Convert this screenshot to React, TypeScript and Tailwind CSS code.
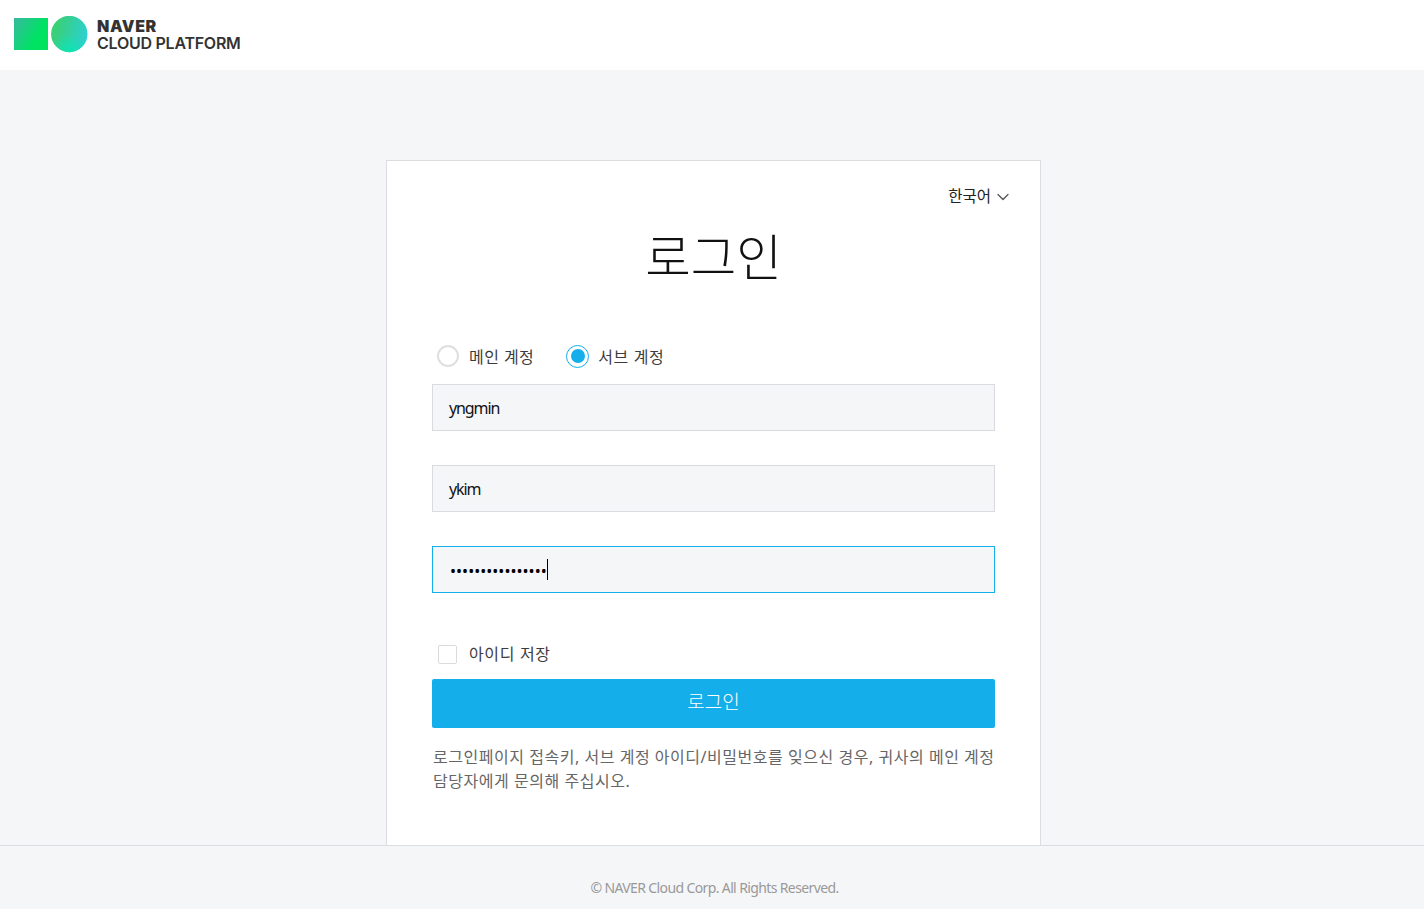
import { ChevronDown } from "lucide-react";

const font = { fontFamily: '"Noto Sans", "Noto Sans CJK KR", sans-serif' };

function Logo() {
  return (
    <svg width="75" height="38" viewBox="0 0 75 38" className="shrink-0">
      <defs>
        <linearGradient id="sq" x1="0" y1="0" x2="1" y2="0.55">
          <stop offset="0" stopColor="#37b9a0" />
          <stop offset="0.75" stopColor="#00e264" />
          <stop offset="1" stopColor="#00e35f" />
        </linearGradient>
        <linearGradient id="ci" x1="0.05" y1="0.35" x2="0.95" y2="0.6">
          <stop offset="0" stopColor="#3bd070" />
          <stop offset="1" stopColor="#2cd0d0" />
        </linearGradient>
        <radialGradient id="ci2" cx="0.5" cy="1" r="0.5">
          <stop offset="0" stopColor="#0be6b0" />
          <stop offset="1" stopColor="#0be6b0" stopOpacity="0" />
        </radialGradient>
      </defs>
      <rect x="0" y="2" width="34" height="32" fill="url(#sq)" />
      <circle cx="55.3" cy="18" r="18.2" fill="url(#ci)" />
      <circle cx="55.3" cy="18" r="18.2" fill="url(#ci2)" />
    </svg>
  );
}

function Field({ value }: { value: string }) {
  return (
    <div className="flex h-[47px] items-center border border-[#d9dbde] bg-[#f5f6f8] pl-[16px] text-[16px] tracking-[-1.1px] text-[#111]">
      {value}
    </div>
  );
}

function PasswordField({ value }: { value: string }) {
  return (
    <div className="flex h-[47px] items-center border border-solid border-[#14aeeb] bg-[#f5f6f8] pl-[17px]">
      <span className="pt-[2px] text-[16px] tracking-[0.03px] text-black">{value}</span>
      <span className="h-[21px] w-px bg-black" />
    </div>
  );
}

export default function App() {
  return (
    <div className="flex h-screen flex-col overflow-hidden bg-[#f5f6f8]" style={font}>
      <header className="flex h-[70px] shrink-0 items-center gap-[8px] bg-white pl-[14px]">
        <Logo />
        <div
          className="text-[16px] leading-[17px] tracking-[-0.25px] text-[#333]"
          style={{ fontFamily: "Inter, sans-serif" }}
        >
          <div className="font-black tracking-[0.6px]">NAVER</div>
          <div className="font-semibold">CLOUD PLATFORM</div>
        </div>
      </header>

      <main className="flex min-h-0 flex-1 justify-center pl-[3px] pt-[90px]">
        <div className="flex w-[655px] flex-col border border-b-0 border-[#dcdde0] bg-white px-[45px]">
          <div className="-mr-[18px] mt-[23px] flex h-[25px] items-center justify-end gap-[2px] self-end text-[15.5px] text-[#222]">
            한국어
            <ChevronDown size={20} strokeWidth={1.5} className="text-[#555]" />
          </div>
          <h1 className="mt-[12px] text-center text-[49.5px] leading-[72px] font-light text-[#111]">로그인</h1>

          <div className="mt-[51px] flex h-[24px] items-center pl-[5px] text-[16px] tracking-[0.45px] text-[#3c3c3c]">
            <span className="h-[22px] w-[22px] rounded-full border-2 border-[#dedfe1] bg-white" />
            <span className="ml-[10px] pt-[2px]">메인 계정</span>
            <span className="ml-[32px] flex h-[23px] w-[23px] items-center justify-center rounded-full border-[1.5px] border-[#14aeeb] bg-white">
              <span className="h-[14px] w-[14px] rounded-full bg-[#14aeeb]" />
            </span>
            <span className="ml-[9px] pt-[2px] tracking-[0.6px]">서브 계정</span>
          </div>

          <div className="mt-[16px] flex flex-col gap-[34px]">
            <Field value="yngmin" />
            <Field value="ykim" />
            <PasswordField value="••••••••••••••••" />
          </div>

          <div className="mt-[50px] flex h-[22px] items-center pl-[6px] text-[16px] tracking-[0.65px] text-[#3c3c3c]">
            <span className="h-[19px] w-[19px] rounded-[2px] border border-[#d9dbde] bg-white" />
            <span className="ml-[12px]">아이디 저장</span>
          </div>

          <button className="mt-[14px] h-[49px] w-full rounded-[2px] bg-[#14aeeb] pb-[2px] text-[19px] font-light text-white">
            로그인
          </button>

          <p className="mt-[17px] pl-px text-[16px] leading-[24px] tracking-[0.53px] text-[#666]">
            로그인페이지 접속키, 서브 계정 아이디/비밀번호를 잊으신 경우, 귀사의 메인 계정
            <br />
            담당자에게 문의해 주십시오.
          </p>
        </div>
      </main>

      <footer className="flex h-[64px] shrink-0 items-center justify-center border-t border-[#dcdde0] bg-[#f5f6f8] pl-[5px] pt-[20px] text-[14px] tracking-[-0.62px] text-[#999]">
        © NAVER Cloud Corp. All Rights Reserved.
      </footer>
    </div>
  );
}
